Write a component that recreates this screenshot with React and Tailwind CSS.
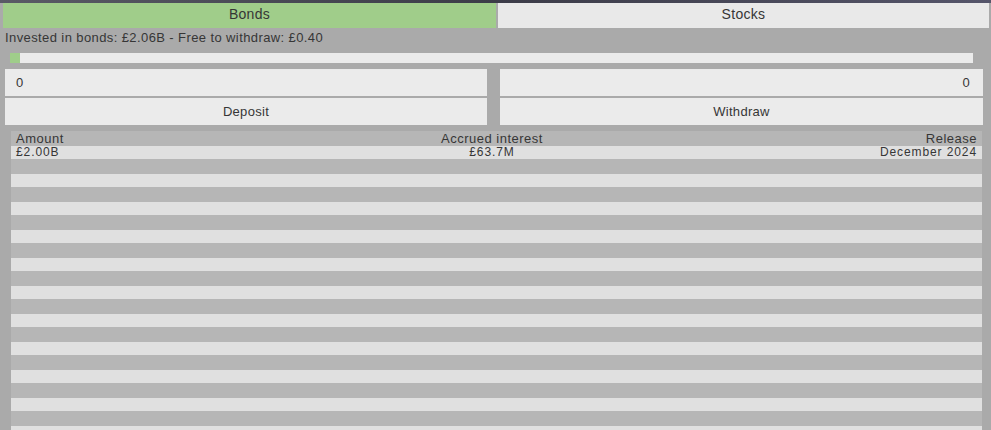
import React from "react";

const rows = [
  { amount: "£2.00B", interest: "£63.7M", release: "December 2024" },
];

const BondRow = ({ row, light }) => (
  <div
    className={`grid grid-cols-3 px-[5px] text-[12px] leading-[13px] tracking-[0.9px] ${
      light ? "h-[13px] bg-[#e0e0e0]" : "h-[15px]"
    }`}
  >
    {row && (
      <>
        <span>{row.amount}</span>
        <span className="text-center pr-[9px]">{row.interest}</span>
        <span className="text-right">{row.release}</span>
      </>
    )}
  </div>
);

export default function App() {
  const stripes = [];
  for (let i = 0; i < 21; i++) {
    stripes.push(<BondRow key={i} light={i % 2 === 0} row={i === 0 ? rows[0] : null} />);
  }

  return (
    <div className="w-[991px] h-[430px] overflow-hidden bg-[#aaaaaa] text-[#363636] font-['Liberation_Sans','Open_Sans',sans-serif]">
      <div className="h-[3px] bg-gradient-to-r from-[#5a5a66] via-[#3c3c48] to-[#55556a]" />
      <div className="flex h-[25px] pl-[3px] gap-[2px] text-[14px] leading-[20px] tracking-[0.3px]">
        <button className="w-[493px] pb-[3px] bg-[#a0cd8a] text-center">Bonds</button>
        <button className="w-[491px] pb-[3px] bg-[#e9e9e9] text-center">Stocks</button>
      </div>

      <p className="pl-[5px] pt-[1px] h-[22px] text-[13px] leading-[18px] tracking-[0.4px]">
        Invested in bonds: £2.06B - Free to withdraw: £0.40
      </p>

      <div className="ml-[10px] mt-[3px] w-[963px] h-[10px] bg-[#ebebeb]">
        <div className="w-[10px] h-full bg-[#9fcd8a]" />
      </div>

      <div className="mt-[6px] ml-[5px] grid grid-cols-[482px_483px] gap-x-[13px] gap-y-[2px] text-[13px] tracking-[0.3px]">
        <div className="h-[27px] bg-[#ebebeb] flex items-center px-[11px]">0</div>
        <div className="h-[27px] bg-[#ebebeb] flex items-center justify-end px-[13px]">0</div>
        <button className="h-[27px] bg-[#ebebeb] text-center">Deposit</button>
        <button className="h-[27px] bg-[#ebebeb] text-center">Withdraw</button>
      </div>

      <div className="ml-[11px] mt-[6px] w-[971px] bg-[#b6b6b6]">
        <div className="grid grid-cols-3 h-[15px] px-[5px] text-[13px] leading-[15px] tracking-[0.5px]">
          <span>Amount</span>
          <span className="text-center pr-[9px]">Accrued interest</span>
          <span className="text-right">Release</span>
        </div>
        {stripes}
      </div>
    </div>
  );
}
